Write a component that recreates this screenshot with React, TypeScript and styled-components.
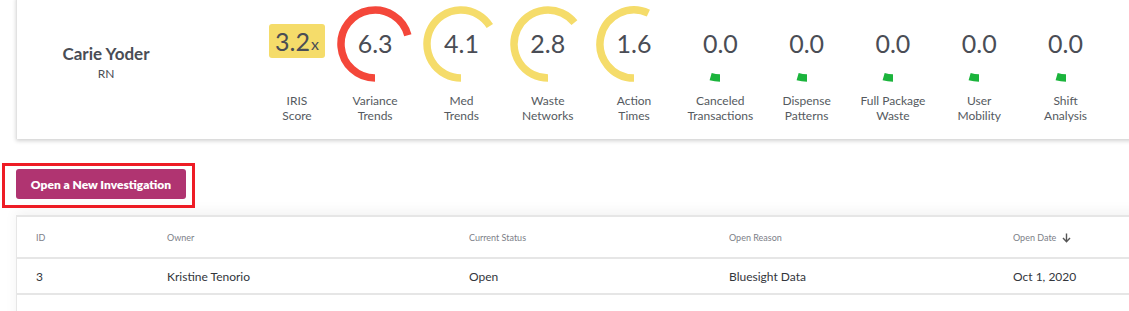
import React from 'react'
import styled, { createGlobalStyle } from 'styled-components'

const RED = '#f4473a'
const YELLOW = '#f5dc6a'
const GREEN = '#1bb43c'

const metrics = [
  { value: '6.3', label: ['Variance', 'Trends'], color: RED, sweep: 255 },
  { value: '4.1', label: ['Med', 'Trends'], color: YELLOW, sweep: 238 },
  { value: '2.8', label: ['Waste', 'Networks'], color: YELLOW, sweep: 231 },
  { value: '1.6', label: ['Action', 'Times'], color: YELLOW, sweep: 205 },
  { value: '0.0', label: ['Canceled', 'Transactions'], color: GREEN, sweep: 16 },
  { value: '0.0', label: ['Dispense', 'Patterns'], color: GREEN, sweep: 16 },
  { value: '0.0', label: ['Full Package', 'Waste'], color: GREEN, sweep: 16 },
  { value: '0.0', label: ['User', 'Mobility'], color: GREEN, sweep: 16 },
  { value: '0.0', label: ['Shift', 'Analysis'], color: GREEN, sweep: 16 },
]

const rows = [
  { id: '3', owner: 'Kristine Tenorio', status: 'Open', reason: 'Bluesight Data', date: 'Oct 1, 2020' },
]

// arc starts at 6 o'clock and runs clockwise
const arcPath = (sweep: number) => {
  const r = 34
  const c = 38
  const theta = ((180 + sweep) * Math.PI) / 180
  const x = c + r * Math.sin(theta)
  const y = c - r * Math.cos(theta)
  const large = sweep > 180 ? 1 : 0
  return `M ${c} ${c + r} A ${r} ${r} 0 ${large} 1 ${x.toFixed(2)} ${y.toFixed(2)}`
}

const Gauge = ({ value, color, sweep }: { value: string; color: string; sweep: number }) => (
  <GaugeStack>
    <svg width="76" height="76" viewBox="0 0 76 76">
      <path d={arcPath(sweep)} fill="none" stroke={color} strokeWidth="7.5" />
    </svg>
    <GaugeValue>{value}</GaugeValue>
  </GaugeStack>
)

const App = () => {
  return (
    <Page>
      <GlobalStyle />
      <ProfileCard>
        <Person>
          <Name>Carie Yoder</Name>
          <Role>RN</Role>
        </Person>
        <IrisColumn>
          <BadgeArea>
            <Badge>
              3.2<small>x</small>
            </Badge>
          </BadgeArea>
          <Label>
            IRIS
            <br />
            Score
          </Label>
        </IrisColumn>
        {metrics.map((m, i) => (
          <Metric key={i}>
            <Gauge value={m.value} color={m.color} sweep={m.sweep} />
            <Label>
              {m.label[0]}
              <br />
              {m.label[1]}
            </Label>
          </Metric>
        ))}
      </ProfileCard>

      <Highlight>
        <PrimaryButton>Open a New Investigation</PrimaryButton>
      </Highlight>

      <TableCard>
        <HeadRow>
          <span>ID</span>
          <span>Owner</span>
          <span>Current Status</span>
          <span>Open Reason</span>
          <SortHead>
            Open Date
            <svg width="9" height="10" viewBox="0 0 9 10">
              <path d="M4.5 0.5 V8.5 M1 5 L4.5 8.7 L8 5" fill="none" stroke="#555" strokeWidth="1.4" />
            </svg>
          </SortHead>
        </HeadRow>
        {rows.map((r) => (
          <DataRow key={r.id}>
            <span>{r.id}</span>
            <span>{r.owner}</span>
            <span>{r.status}</span>
            <span>{r.reason}</span>
            <span>{r.date}</span>
          </DataRow>
        ))}
        <DataRow />
      </TableCard>
    </Page>
  )
}

export default App

const GlobalStyle = createGlobalStyle`
  html, body {
    margin: 0;
    padding: 0;
    background: #fff;
    overflow: hidden;
  }
  body {
    font-family: Lato, "Liberation Sans", sans-serif;
    color: #4a4d55;
  }
`
const Page = styled.div`
  width: 1129px;
  height: 311px;
  padding-left: 16px;
  box-sizing: border-box;
  overflow: hidden;
`
const ProfileCard = styled.div`
  display: flex;
  align-items: flex-start;
  width: 1140px;
  height: 143px;
  margin-top: -4px;
  padding-top: 10px;
  box-sizing: border-box;
  background: #fff;
  border-left: 1px solid #e2e2e2;
  box-shadow: 0 2px 4px rgba(0, 0, 0, 0.18);
`
const Person = styled.div`
  width: 178px;
  padding-top: 38px;
  display: flex;
  flex-direction: column;
  align-items: center;
`
const Name = styled.div`
  font-size: 17px;
  font-weight: 700;
  color: #4a4d55;
  line-height: 20px;
`
const Role = styled.div`
  margin-top: 1px;
  font-size: 12px;
  line-height: 18px;
  color: #4a4d55;
`
const IrisColumn = styled.div`
  width: 70px;
  margin-left: 67px;
  display: flex;
  flex-direction: column;
  align-items: center;
`
const BadgeArea = styled.div`
  height: 76px;
  padding-top: 18px;
  box-sizing: border-box;
`
const Badge = styled.div`
  background: ${YELLOW};
  border-radius: 3px;
  height: 34px;
  padding: 0 6px 0 6px;
  display: flex;
  align-items: center;
  font-size: 25px;
  color: #4a4d55;
  small {
    font-size: 16px;
    margin-left: 1px;
    margin-top: 5px;
  }
`
const Metric = styled.div`
  width: 86.3px;
  flex-shrink: 0;
  display: flex;
  flex-direction: column;
  align-items: center;
`
const GaugeStack = styled.div`
  display: grid;
  width: 76px;
  height: 76px;
  & > * {
    grid-area: 1 / 1;
  }
  svg {
    display: block;
  }
`
const GaugeValue = styled.div`
  align-self: center;
  justify-self: center;
  font-size: 25px;
  line-height: 1;
  color: #4a4d55;
  margin-top: -1px;
`
const Label = styled.div`
  margin-top: 11px;
  font-size: 12px;
  line-height: 15px;
  text-align: center;
  color: #555a60;
  white-space: nowrap;
`
const Highlight = styled.div`
  display: inline-flex;
  margin: 24px 0 0 -14px;
  padding: 3px 6px 6px 11px;
  border: 3px solid #ee1c25;
`
const PrimaryButton = styled.button`
  width: 170px;
  height: 30px;
  border: none;
  border-radius: 3px;
  background: #b03471;
  color: #fff;
  font-family: Lato, "Liberation Sans", sans-serif;
  font-weight: 800;
  font-size: 12px;
  cursor: pointer;
`
const TableCard = styled.div`
  margin-top: 7px;
  width: 1140px;
  background: #fff;
  border-top: 2px solid #e6e6e6;
  border-left: 1px solid #e6e6e6;
  box-shadow: 0 -4px 12px rgba(0, 0, 0, 0.05);
`
const HeadRow = styled.div`
  display: grid;
  grid-template-columns: 131px 302px 260px 284px 1fr;
  align-items: center;
  height: 40px;
  padding-left: 19px;
  border-bottom: 2px solid #e6e6e6;
  font-size: 9px;
  color: #7d8088;
`
const SortHead = styled.span`
  display: flex;
  align-items: center;
  gap: 6px;
  svg {
    margin-top: 2px;
  }
`
const DataRow = styled.div`
  display: grid;
  grid-template-columns: 131px 302px 260px 284px 1fr;
  align-items: center;
  height: 34px;
  padding-left: 19px;
  border-bottom: 2px solid #e6e6e6;
  font-size: 12px;
  color: #33363c;
`
